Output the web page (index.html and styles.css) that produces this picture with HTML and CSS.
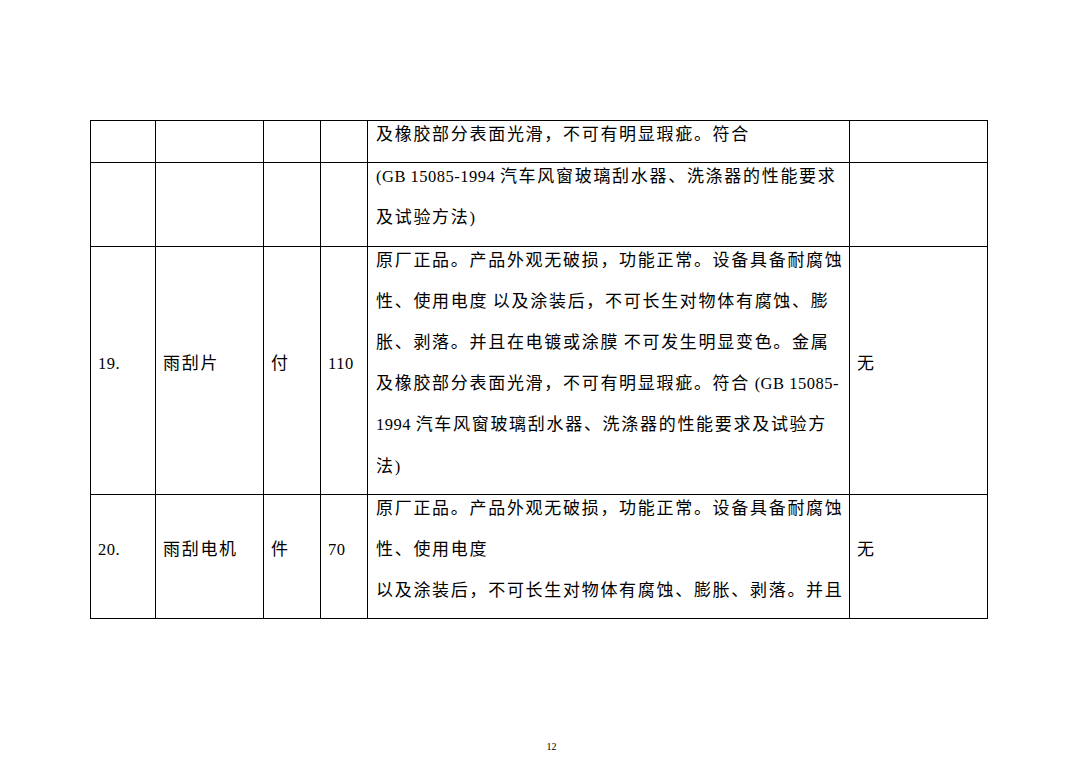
FILE: index.html
```html
<!DOCTYPE html>
<html lang="zh-CN">
<head>
<meta charset="utf-8">
<title>12</title>
<link rel="stylesheet" href="styles.css">
</head>
<body>
<div class="page">
  <table class="spec">
    <colgroup>
      <col class="c-no"><col class="c-name"><col class="c-unit"><col class="c-qty"><col class="c-desc"><col class="c-note">
    </colgroup>
    <tr>
      <td></td><td></td><td></td><td></td>
      <td class="desc"><div class="in"><div class="ln">及橡胶部分表面光滑，不可有明显瑕疵。符合</div></div></td>
      <td></td>
    </tr>
    <tr>
      <td></td><td></td><td></td><td></td>
      <td class="desc"><div class="in">
        <div class="ln"><span class="lat">(GB 15085-1994 </span>汽车风窗玻璃刮水器、洗涤器的性能要求</div>
        <div class="ln">及试验方法<span class="lat">)</span></div>
      </div></td>
      <td></td>
    </tr>
    <tr>
      <td class="mid"><div class="in"><span class="lat">19.</span></div></td>
      <td class="mid"><div class="in">雨刮片</div></td>
      <td class="mid"><div class="in">付</div></td>
      <td class="mid"><div class="in"><span class="lat">110</span></div></td>
      <td class="desc"><div class="in">
        <div class="ln">原厂正品。产品外观无破损，功能正常。设备具备耐腐蚀</div>
        <div class="ln">性、使用电度<span class="lat"> </span>以及涂装后，不可长生对物体有腐蚀、膨</div>
        <div class="ln">胀、剥落。并且在电镀或涂膜<span class="lat"> </span>不可发生明显变色。金属</div>
        <div class="ln">及橡胶部分表面光滑，不可有明显瑕疵。符合<span class="lat"> (GB 15085-</span></div>
        <div class="ln"><span class="lat">1994 </span>汽车风窗玻璃刮水器、洗涤器的性能要求及试验方</div>
        <div class="ln">法<span class="lat">)</span></div>
      </div></td>
      <td class="mid"><div class="in">无</div></td>
    </tr>
    <tr>
      <td class="mid"><div class="in"><span class="lat">20.</span></div></td>
      <td class="mid"><div class="in">雨刮电机</div></td>
      <td class="mid"><div class="in">件</div></td>
      <td class="mid"><div class="in"><span class="lat">70</span></div></td>
      <td class="desc"><div class="in">
        <div class="ln">原厂正品。产品外观无破损，功能正常。设备具备耐腐蚀</div>
        <div class="ln">性、使用电度</div>
        <div class="ln">以及涂装后，不可长生对物体有腐蚀、膨胀、剥落。并且</div>
      </div></td>
      <td class="mid"><div class="in">无</div></td>
    </tr>
  </table>
  <div class="pagenum">12</div>
</div>
</body>
</html>
```

FILE: styles.css
```css
html, body {
  margin: 0;
  padding: 0;
  background: #ffffff;
}

body {
  font-family: "Liberation Serif", "Noto Sans CJK SC", serif;
  color: #000000;
}

.page {
  width: 1077px;
  height: 761px;
  padding-top: 120px;
  box-sizing: border-box;
}

.spec {
  margin-left: 90px;
  width: 897px;
  border-collapse: collapse;
  table-layout: fixed;
  font-size: 17px;
  letter-spacing: 1.7px;
}

.c-no { width: 65px; }
.c-name { width: 108px; }
.c-unit { width: 57px; }
.c-qty { width: 47px; }
.c-desc { width: 482px; }
.c-note { width: 138px; }

.spec td {
  border: 1px solid #000000;
  padding: 0 4px 0 7px;
  vertical-align: top;
  line-height: 41.2px;
  height: 41.2px;
  white-space: nowrap;
  overflow: hidden;
}

.spec td.mid {
  vertical-align: middle;
}

.spec td.desc {
  padding-left: 8px;
}

.in {
  margin-top: -7px;
  margin-bottom: 7px;
}

.ln {
  height: 41.2px;
}

.lat {
  font-size: 16.5px;
  letter-spacing: 0.5px;
}

.pagenum {
  margin-top: 122px;
  padding-left: 26px;
  text-align: center;
  font-size: 10px;
  line-height: 12px;
}
```
